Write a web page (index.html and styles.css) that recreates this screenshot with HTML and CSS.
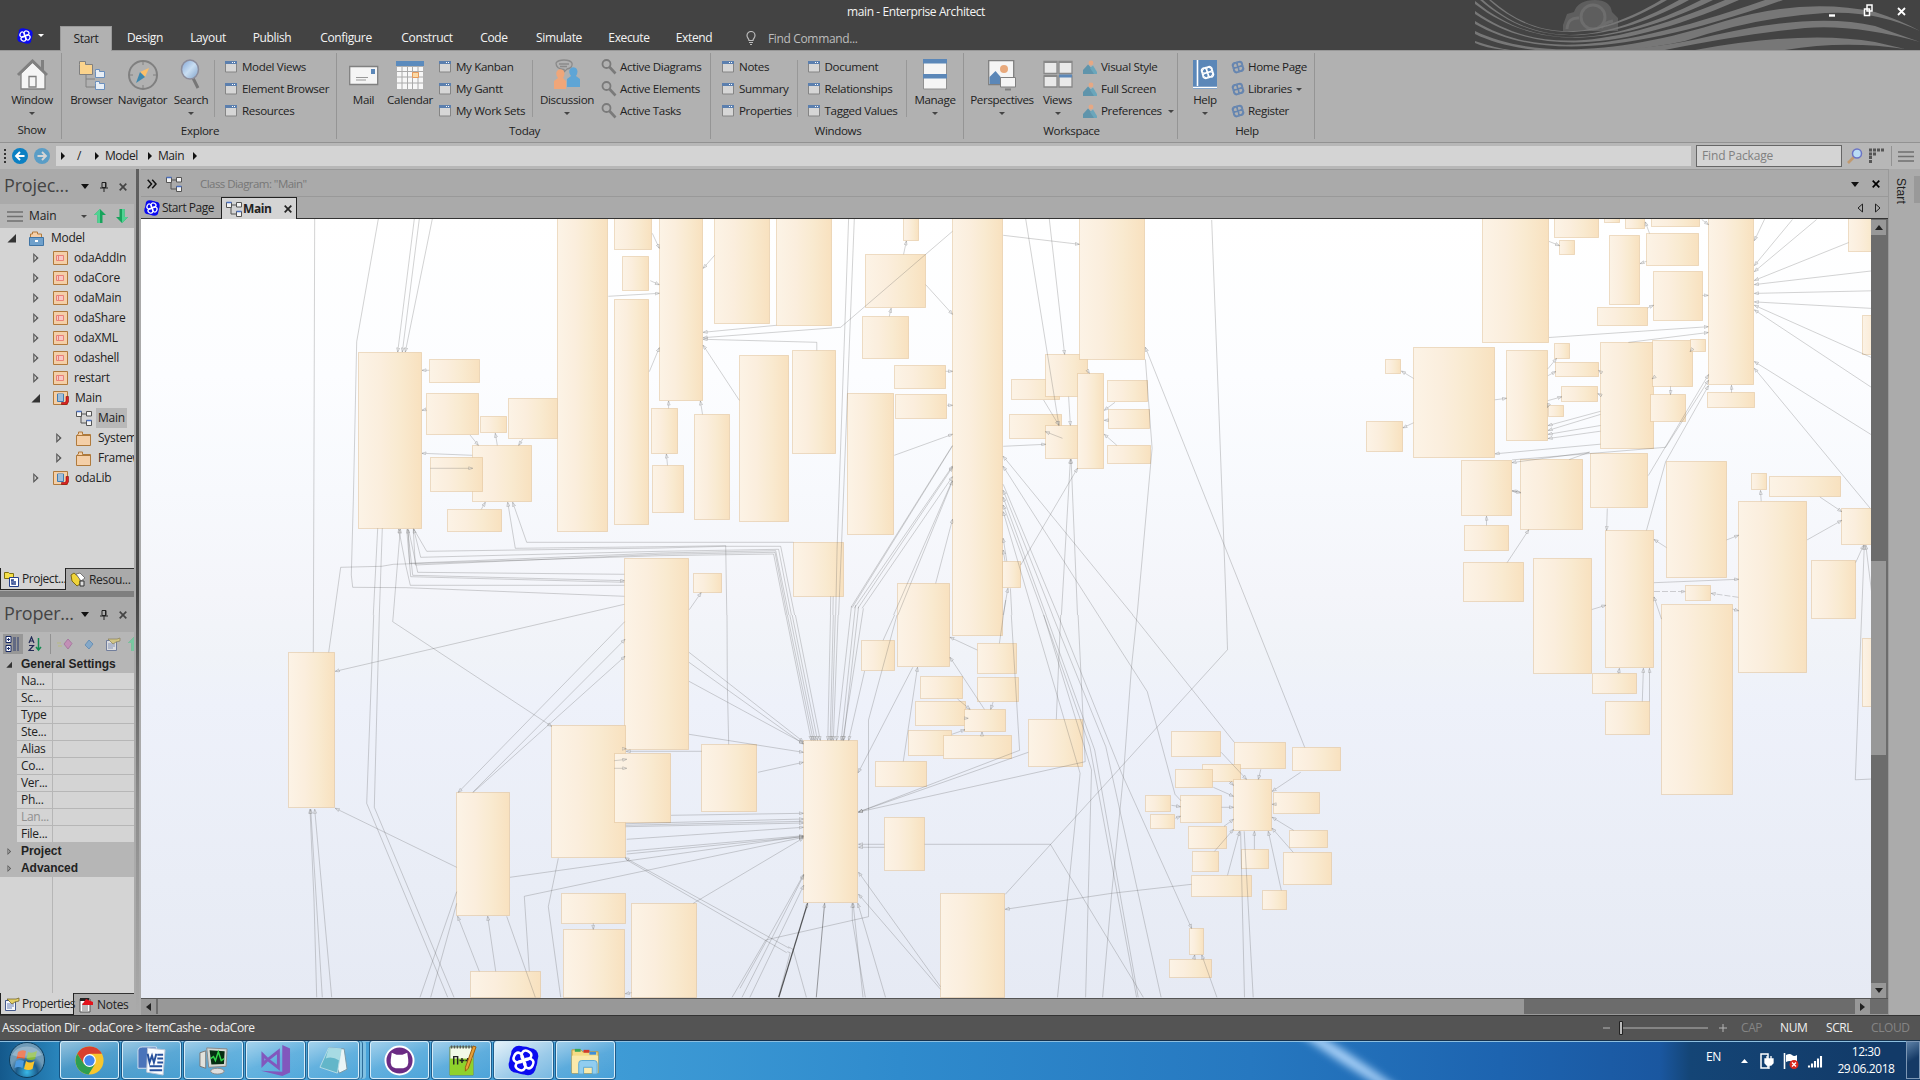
FILE: index.html
```html
<!DOCTYPE html>
<html lang="en">
<head>
<meta charset="utf-8">
<title>main - Enterprise Architect</title>
<link rel="stylesheet" href="styles.css">
</head>
<body>
<svg class="defs" width="0" height="0">
  <defs>
    <linearGradient id="box" x1="0" x2="1" y1="0" y2="0"><stop offset="0" stop-color="#fcf3e6"/><stop offset=".35" stop-color="#fbeedd"/><stop offset=".65" stop-color="#f9ead0"/><stop offset="1" stop-color="#f8e1bf"/></linearGradient>
    <linearGradient id="lens" x1="0" x2="1" y1="0" y2="1"><stop offset="0" stop-color="#7fa3d4"/><stop offset=".5" stop-color="#c9def2"/><stop offset="1" stop-color="#7ea0c8"/></linearGradient>
    <marker id="arrow" viewBox="0 0 6 6" refX="6" refY="3" markerWidth="5" markerHeight="4" markerUnits="userSpaceOnUse" orient="auto"><path d="M0 .7L6 3L0 5.3z" fill="#fff" fill-opacity=".3" stroke="#666" stroke-opacity=".4" stroke-width="1"/></marker>
  </defs>
  <symbol id="i-win" viewBox="0 0 12 12"><path d="M.5 .5h11v10.500h-11z" fill="#d6d6d6" stroke="#858585"/><path d="M0 0h12v3H0z" fill="#5b7fae"/><path d="M7 1h1v1H7zM9 1h1v1H9z" fill="#fff"/></symbol>
  <symbol id="i-mag" viewBox="0 0 16 16"><circle cx="5.500" cy="5" r="4" fill="none" stroke="#7a7a7a" stroke-width="1.800"/><path d="M8.500 8l6 6.500" stroke="#7a7a7a" stroke-width="2.600"/></symbol>
  <symbol id="i-pic" viewBox="0 0 14 14"><circle cx="8" cy="3" r="2.400" fill="#e6a884"/><path d="M0 14V10L5 4.500L14 14z" fill="#5f94ab"/><path d="M7 8l3-2.500L14 12v2h-3z" fill="#6ba6bb"/></symbol>
  <symbol id="i-knot" viewBox="0 0 16 16"><g fill="none" stroke="currentColor" stroke-width="1.400" transform="rotate(28 8 8)"><path d="M8 8C4.500 6.500 4.500 1 8 1s4 5 0 7M8 8c1.500-3.500 7-3.500 7 0s-5 4-7 0M8 8c3.500 1.500 3.500 7 0 7s-4-5 0-7M8 8c-1.500 3.500-7 3.500-7 0s5-4 7 0"/><circle cx="8" cy="8" r="5.800"/></g></symbol>
  <symbol id="i-ea" viewBox="0 0 24 24"><g fill="#0a0af0"><circle cx="12" cy="12" r="10.800"/><circle cx="8.500" cy="6.500" r="6"/><circle cx="17.500" cy="8.500" r="6"/><circle cx="15.500" cy="17.500" r="6"/><circle cx="6.500" cy="15.500" r="6"/></g><g fill="none" stroke="#fff" stroke-width="1.900" transform="rotate(28 12 12)"><path d="M12 12C7 10 7 4 12 4s5 5 0 8"/><path d="M12 12c2-5 8-5 8 0s-5 5-8 0"/><path d="M12 12c5 2 5 8 0 8s-5-5 0-8"/><path d="M12 12c-2 5-8 5-8 0s5-5 8 0"/></g></symbol>
  <symbol id="i-dia" viewBox="0 0 16 16"><path d="M6 4h5M5 6v7h5" fill="none" stroke="#555"/><path d="M.5 1.500h5v5h-5zM10.500 1.500h5v4.500h-5zM10.500 10.500h5v5h-5z" fill="#f4f4f4" stroke="#555"/><path d="M.5 1.500h5M10.500 10.500h5" stroke="#4a6fc0" stroke-width="1.600"/></symbol>
  <symbol id="i-comp" viewBox="0 0 15 14"><path d="M.5 .5h14v13h-14z" fill="#f4cfa8" stroke="#b07a3c"/><path d="M3.500 4.500h7v5h-7zM5.500 4.500v5" fill="#f8c8c4" stroke="#e8817a"/></symbol>
  <symbol id="i-doc" viewBox="0 0 16 14"><path d="M.5 .5h14v13h-14z" fill="#f4cfa8" stroke="#b07a3c"/><path d="M4.500 3h6v7.500h-6z" fill="#fff" stroke="#3e7cb4"/><path d="M5 5h5M5 7h5M5 9h5" stroke="#3e7cb4"/><path d="M15.500 5.500v5.500l-2 2.500H8.500v-2h3l1.500-1V5.500z" fill="#d22" stroke="#700" stroke-width=".5"/></symbol>
  <symbol id="i-fold" viewBox="0 0 16 15"><path d="M.5 14.500v-10L2.500 3V1h4v2.500h8v11z" fill="#f4cfa8" stroke="#b07a3c"/><path d="M.5 4.500h14" stroke="#b07a3c"/></symbol>
  <symbol id="i-pin" viewBox="0 0 8 10"><path d="M2 .5h4v5H2zM0 6h8M4 6v4M5.500 1v5" fill="none" stroke="#222"/></symbol>
  <symbol id="i-x" viewBox="0 0 8 8"><path d="M.7 .7l6.600 6.600M7.300 .7L.7 7.300" stroke="currentColor" stroke-width="1.700"/></symbol>
  <symbol id="i-up" viewBox="0 0 12 14"><path d="M6 0l6 6H8.500v8h-5V6H0z" fill="#18a45c"/><path d="M6 0L0 6h3.500v8H6z" fill="#4fd392"/></symbol>
  <symbol id="i-bars" viewBox="0 0 16 11"><path d="M0 1h16M0 5.500h16M0 10h16" stroke="#707070" stroke-width="1.600"/></symbol>
  <symbol id="i-hand" viewBox="0 0 16 14"><path d="M1.500 3.500h10v10h-10z" fill="#f4f6fb" stroke="#44598c"/><path d="M3 7h7M3 9h7M3 11h5" stroke="#6a82b8"/><path d="M3 2h9l3-1v3l-4 1-3 2-3-3z" fill="#e3cf66" stroke="#6a5a20" stroke-width=".7"/></symbol>
</svg>

<header class="title">
  <svg class="waves" viewBox="0 0 445 50" preserveAspectRatio="none">
    <g fill="#5e5e5e"><path d="M88 31V25L92 14L99 12Q103 0 120 0Q135 0 137 12L143 18V31z"/></g>
    <g fill="none" stroke="#6d6d6d" stroke-width="3"><circle cx="118" cy="17" r="12"/><path d="M92 29Q93 17 104 18M126 28Q130 22 138 21"/></g>
    <g fill="#777">
      <path d="M16 0C60 38 110 45 186 0h6C110 48 56 37 14 0z"/>
      <path d="M8 0C60 46 120 47 204 0h10C120 50 56 44 5 0z"/>
      <path d="M0 1C60 51 130 48 226 0h12C130 52 56 47 0 4z"/>
      <path d="M0 11C60 54 130 50 250 0h14C140 54 60 54 0 14z"/>
      <path d="M0 21C60 58 140 52 290 0h18C150 56 60 58 0 24z"/>
      <path d="M0 31C60 60 150 53 250 21Q330-3 400 12Q425 20 445 31Q400 10 350 13Q280 17 210 41C120 60 40 54 0 34z"/>
      <path d="M20 50C100 56 180 50 240 35Q340 12 400 26L445 42Q380 24 330 28Q270 34 190 50z"/>
      <path d="M220 50Q330 30 400 42L430 49Q370 40 310 50z"/>
      <path d="M0 41Q20 48 36 50H30Q10 48 0 43z"/>
    </g>
  </svg>
  <div class="caption">main - Enterprise Architect</div>
  <div class="winbtns"><svg width="80" height="14" viewBox="0 0 80 14"><path d="M0 11.500h6" stroke="#fff" stroke-width="2.400"/><path d="M38 1h5v6h-5zM35.500 5h5v6.500h-5z" fill="#444" stroke="#fff" stroke-width="1.500"/><path d="M69 4l7 7M76 4l-7 7" stroke="#fff" stroke-width="1.800"/></svg></div>
  <nav class="tabs">
    <span class="app"><svg width="16" height="16"><use href="#i-ea"/></svg><i class="dn w"></i></span>
    <span class="on">Start</span><span>Design</span><span>Layout</span><span>Publish</span><span>Configure</span><span>Construct</span><span>Code</span><span>Simulate</span><span>Execute</span><span>Extend</span>
    <span class="find"><svg width="10" height="14" viewBox="0 0 10 14"><path d="M3 9.500C3 7.500 1 7 1 4.500a4 4 0 0 1 8 0C9 7 7 7.500 7 9.500zM3 11.500h4M4 13.500h2" fill="none" stroke="#bbb" stroke-width="1.200"/></svg>Find Command...</span>
  </nav>
</header>

<section class="ribbon">
  <div class="group g-show"><div class="tools">
    <div class="big"><svg width="32" height="32" viewBox="0 0 32 32"><path d="M5 14v16h24V14L16.500 3z" fill="#f5f5f5" stroke="#808080" stroke-width="1.300"/><path d="M2 16L16.500 2L31 16M26.500 1v10" fill="none" stroke="#808080" stroke-width="3"/><path d="M13 17.500h7v10.500h-7z" fill="none" stroke="#808080" stroke-width="1.300"/></svg><b>Window</b><i class="dn"></i></div>
  </div><div class="gname">Show</div></div>

  <div class="group g-explore"><div class="tools">
    <div class="big"><svg width="30" height="32" viewBox="0 0 30 32"><path d="M9 15v13h9M9 20h9" fill="none" stroke="#808080"/><path d="M2.500 5.500v-3h6v3h7v10h-13z" fill="#fbd38c" stroke="#808080"/><path d="M18.500 12.500v-2h4v2h5v6h-9zM18.500 24.500v-2h4v2h5v6h-9z" fill="#e8eef5" stroke="#6a8fbd"/></svg><b>Browser</b></div>
    <div class="big"><svg width="32" height="32" viewBox="0 0 32 32"><circle cx="16" cy="16" r="14" fill="none" stroke="#808080" stroke-width="2"/><path d="M16 3v3M16 26v3M3 16h3M26 16h3" stroke="#808080"/><path d="M22 9L18 18L13 13z" fill="#fbc06a"/><path d="M9 24l4-11 5 5z" fill="#3f88ae"/></svg><b>Navigator</b></div>
    <div class="big"><svg width="32" height="32" viewBox="0 0 32 32"><path d="M18 19l5 10" stroke="#777" stroke-width="3"/><ellipse cx="15" cy="10.500" rx="8.500" ry="9.500" fill="url(#lens)" stroke="#8c8c9a" stroke-width="1.500"/></svg><b>Search</b><i class="dn"></i></div>
    <hr>
    <ul class="list"><li><svg><use href="#i-win"/></svg>Model Views</li><li><svg><use href="#i-win"/></svg>Element Browser</li><li><svg><use href="#i-win"/></svg>Resources</li></ul>
  </div><div class="gname">Explore</div></div>

  <div class="group g-today"><div class="tools">
    <div class="big"><svg width="30" height="32" viewBox="0 0 30 32"><path d="M.7 7.500h28v18h-28z" fill="#f5f5f5" stroke="#808080" stroke-width="1.300"/><path d="M22 10h4v5h-4z" fill="#5b87b8"/><path d="M7 18.500h12M7 21h10" stroke="#999"/></svg><b>Mail</b></div>
    <div class="big"><svg width="28" height="32" viewBox="0 0 28 32"><path d="M0 2h28v5H0z" fill="#5b8bbd"/><path d="M1 8h26v22H1z" fill="#f7f7f7"/><path d="M6 8v22M11.500 8v22M16.500 8v22M22 8v22M1 12.500h26M1 18h26M1 24h26" stroke="#aaa"/><path d="M16.500 13.500h6v5h-6z" fill="#fbd9a5" stroke="#e79a5c"/></svg><b>Calendar</b></div>
    <ul class="list kan"><li><svg><use href="#i-win"/></svg>My Kanban</li><li><svg><use href="#i-win"/></svg>My Gantt</li><li><svg><use href="#i-win"/></svg>My Work Sets</li></ul>
    <hr>
    <div class="big wide"><svg width="30" height="32" viewBox="0 0 30 32"><path d="M4 4q2-3 8-3t8 3q1 5-5 6l-3 3v-2.500Q4 10 4 4zM7 5h10M8 7.500h7" fill="none" stroke="#8a8a8a" stroke-width="1.300"/><path d="M2 30V22l4-3q-3-4-1-7t6-1q3 3 0 8l3 3v8z" fill="#f0a679"/><path d="M15 28V20l4-3q-3-4-1-7t6-1q3 3 0 8l4 3v8z" fill="#5ea5d6"/></svg><b>Discussion</b><i class="dn"></i></div>
    <ul class="list magl"><li><svg><use href="#i-mag"/></svg>Active Diagrams</li><li><svg><use href="#i-mag"/></svg>Active Elements</li><li><svg><use href="#i-mag"/></svg>Active Tasks</li></ul>
  </div><div class="gname">Today</div></div>

  <div class="group g-windows"><div class="tools">
    <ul class="list notes"><li><svg><use href="#i-win"/></svg>Notes</li><li><svg><use href="#i-win"/></svg>Summary</li><li><svg><use href="#i-win"/></svg>Properties</li></ul>
    <hr>
    <ul class="list docs"><li><svg><use href="#i-win"/></svg>Document</li><li><svg><use href="#i-win"/></svg>Relationships</li><li><svg><use href="#i-win"/></svg>Tagged Values</li></ul>
    <hr>
    <div class="big man"><svg width="24" height="32" viewBox="0 0 24 32"><path d="M.5 .5h23v29.500H.5z" fill="#f5f5f5" stroke="#909090"/><path d="M0 0h24v4.500H0zM0 15h24v4.500H0z" fill="#5b87b8"/></svg><b>Manage</b><i class="dn"></i></div>
  </div><div class="gname">Windows</div></div>

  <div class="group g-work"><div class="tools">
    <div class="big persp"><svg width="30" height="32" viewBox="0 0 30 32"><path d="M1.700 1.700h25v24h-25z" fill="#f5f5f5" stroke="#808080" stroke-width="1.300"/><circle cx="17" cy="10" r="4" fill="#e8a97c"/><path d="M2.500 25V18l6-6 6 7v6z" fill="#5b87b8"/><path d="M13.500 18.500h15v9.500h-15z" fill="#f5f5f5" stroke="#808080"/><path d="M18 30.500h6" stroke="#808080" stroke-width="2"/></svg><b>Perspectives</b><i class="dn"></i></div>
    <div class="big views"><svg width="30" height="32" viewBox="0 0 30 32"><path d="M1 2.500h13v12H1zM16 2.500h13v12H16zM1 17h13v11H1zM16 17h13v11H16z" fill="#e9e9e9" stroke="#888" stroke-width="1.300"/><path d="M1 3h13M16 3h13M1 17h13" stroke="#888" stroke-width="2"/><path d="M16 17h13" stroke="#5b87b8" stroke-width="3"/></svg><b>Views</b><i class="dn"></i></div>
    <ul class="list pics"><li><svg><use href="#i-pic"/></svg>Visual Style</li><li><svg><use href="#i-pic"/></svg>Full Screen</li><li><svg><use href="#i-pic"/></svg>Preferences<i class="dn"></i></li></ul>
  </div><div class="gname">Workspace</div></div>

  <div class="group g-help"><div class="tools">
    <div class="big helpb"><svg width="24" height="32" viewBox="0 0 24 32"><path d="M0 1h24v29H0z" fill="#5b87b8"/><path d="M4.500 1v26M0 28.500h24" stroke="#fff" stroke-width="1.600"/><svg x="7" y="6" width="15" height="15" color="#fff"><use href="#i-knot"/></svg></svg><b>Help</b><i class="dn"></i></div>
    <ul class="list knots"><li><svg><use href="#i-knot"/></svg>Home Page</li><li><svg><use href="#i-knot"/></svg>Libraries<i class="dn"></i></li><li><svg><use href="#i-knot"/></svg>Register</li></ul>
  </div><div class="gname">Help</div></div>
</section>

<div class="address">
  <i class="grip"></i>
  <svg width="16" height="16" viewBox="0 0 16 16"><circle cx="8" cy="8" r="8" fill="#0b80c3"/><path d="M12.500 8H4.500M8 4L4 8l4 4" fill="none" stroke="#fff" stroke-width="1.900"/></svg>
  <svg class="fwd" width="16" height="16" viewBox="0 0 16 16"><circle cx="8" cy="8" r="8" fill="#5a9dc6"/><path d="M3.500 8h8M8 4l4 4-4 4" fill="none" stroke="#d5d5d5" stroke-width="1.900"/></svg>
  <div class="path"><i class="rt"></i><span class="p1">/</span><i class="rt"></i><span class="p2">Model</span><i class="rt"></i><span class="p3">Main</span><i class="rt"></i></div>
  <div class="findpkg">Find Package</div>
  <svg class="fi" width="16" height="16" viewBox="0 0 16 16"><path d="M1 15l6-6" stroke="#c19a70" stroke-width="2.600"/><circle cx="10" cy="5.500" r="4.500" fill="#b9dcf5" stroke="#6b74c4" stroke-width="1.500"/></svg>
  <svg class="fg" width="16" height="16" viewBox="0 0 16 16"><path d="M0 2h16M0 6h8" stroke="#555" stroke-width="3" stroke-dasharray="3 1"/><path d="M1.500 8v8" stroke="#555" stroke-width="3" stroke-dasharray="3 1"/></svg>
  <i class="vsep"></i>
  <svg width="16" height="11"><use href="#i-bars"/></svg>
</div>

<main class="work">
  <aside class="left">
    <div class="phead"><span>Projec...</span><i class="dn k"></i><svg width="8" height="10"><use href="#i-pin"/></svg><svg width="8" height="8"><use href="#i-x"/></svg></div>
    <div class="ptool"><svg width="16" height="11"><use href="#i-bars"/></svg><span>Main</span><i class="dn"></i><svg width="12" height="14"><use href="#i-up"/></svg><svg class="flip" width="12" height="14"><use href="#i-up"/></svg></div>
    <ul class="tree">
      <li class="l0"><i class="open"></i><svg width="16" height="15" viewBox="0 0 16 15"><path d="M1.500 6V3h2V1h5v2h4v3" fill="#f4cfa8" stroke="#b07a3c"/><path d="M.5 6.500h14v8H.5z" fill="#6fa0cb" stroke="#3f74a5"/><path d="M6 9h3v2H6z" fill="#fff"/></svg><span>Model</span></li>
      <li class="l1"><i class="shut"></i><svg width="15" height="14"><use href="#i-comp"/></svg><span>odaAddIn</span></li>
      <li class="l1"><i class="shut"></i><svg width="15" height="14"><use href="#i-comp"/></svg><span>odaCore</span></li>
      <li class="l1"><i class="shut"></i><svg width="15" height="14"><use href="#i-comp"/></svg><span>odaMain</span></li>
      <li class="l1"><i class="shut"></i><svg width="15" height="14"><use href="#i-comp"/></svg><span>odaShare</span></li>
      <li class="l1"><i class="shut"></i><svg width="15" height="14"><use href="#i-comp"/></svg><span>odaXML</span></li>
      <li class="l1"><i class="shut"></i><svg width="15" height="14"><use href="#i-comp"/></svg><span>odashell</span></li>
      <li class="l1"><i class="shut"></i><svg width="15" height="14"><use href="#i-comp"/></svg><span>restart</span></li>
      <li class="l1"><i class="open"></i><svg width="16" height="14"><use href="#i-doc"/></svg><span>Main</span></li>
      <li class="l2"><i></i><svg width="16" height="16"><use href="#i-dia"/></svg><span class="sel">Main</span></li>
      <li class="l2"><i class="shut"></i><svg width="16" height="15"><use href="#i-fold"/></svg><span>System</span></li>
      <li class="l2"><i class="shut"></i><svg width="16" height="15"><use href="#i-fold"/></svg><span>Framew</span></li>
      <li class="l1"><i class="shut"></i><svg width="16" height="14"><use href="#i-doc"/></svg><span>odaLib</span></li>
    </ul>
    <div class="ptabs"><span class="on"><svg width="16" height="16" viewBox="0 0 16 16"><path d="M.5 1.500h4l1 1h4v5h-9z" fill="#f5e04a" stroke="#807010"/><path d="M5.500 6.500h9v9h-9z" fill="#fff" stroke="#25408c"/><path d="M7 9h3M8 9v4h4M9 11h3" stroke="#25408c" stroke-width="1.400" fill="none"/></svg>Project...</span><span><svg width="16" height="16" viewBox="0 0 16 16"><path d="M1 3l3-2 6 5v6l-3 2-5-5z" fill="#f0d43a" stroke="#7d6a12"/><path d="M6 2l4-1 5 5-4 3z" fill="#fff" stroke="#777"/><path d="M10 9h4v5h-4z" fill="#ddd" stroke="#333"/></svg>Resou...</span></div>
    <div class="hsplit"></div>
    <div class="phead"><span>Proper...</span><i class="dn k"></i><svg width="8" height="10"><use href="#i-pin"/></svg><svg width="8" height="8"><use href="#i-x"/></svg></div>
    <div class="ptool props">
      <em><svg width="16" height="16" viewBox="0 0 16 16"><path d="M1 .5h5v6H1zM1 9.500h5v6H1z" fill="#fff" stroke="#182a66"/><path d="M2 3.500h3M3.500 2v3M2 12.500h3M3.500 11v3" stroke="#182a66"/><path d="M8 2h6M8 4h6M8 6h6M8 8h6M8 10h6M8 12h6M8 14h6" stroke="#2c3d70" stroke-dasharray="3 1"/></svg></em>
      <svg width="14" height="16" viewBox="0 0 14 16"><path d="M1 7l2.500-6L6 7M2 5h3M1 9.500h4.500L1 14.500h5" fill="none" stroke="#222a55" stroke-width="1.200"/><path d="M10.500 2v11M8 11l2.500 3 2.500-3" fill="none" stroke="#128a50" stroke-width="1.500"/></svg>
      <i class="vsep"></i>
      <svg width="16" height="14" viewBox="0 0 16 14"><path d="M11 2l4 4.500L11 12 7 7z" fill="#c28fb6" stroke="#a77aa0"/><path d="M0 6h4M1 9h4" stroke="#b9bb80"/></svg>
      <svg class="blue" width="10" height="14" viewBox="0 0 10 14"><path d="M5 3l4 4-4 5-4-4z" fill="#84a8c8" stroke="#6a90b4"/></svg>
      <svg class="dim" width="16" height="14"><use href="#i-hand"/></svg>
      <svg class="dim last" width="12" height="14"><use href="#i-up"/></svg>
    </div>
    <div class="grid">
      <div class="cat"><i class="open s"></i>General Settings</div>
      <div class="row"><span>Na...</span></div><div class="row"><span>Sc...</span></div><div class="row"><span>Type</span></div><div class="row"><span>Ste...</span></div><div class="row"><span>Alias</span></div><div class="row"><span>Co...</span></div><div class="row"><span>Ver...</span></div><div class="row"><span>Ph...</span></div><div class="row off"><span>Lan...</span></div><div class="row"><span>File...</span></div>
      <div class="cat"><i class="shut s"></i>Project</div>
      <div class="cat"><i class="shut s"></i>Advanced</div>
      <div class="rest"></div>
    </div>
    <div class="ptabs second"><span class="on"><svg width="16" height="14"><use href="#i-hand"/></svg>Properties</span><span><svg width="16" height="16" viewBox="0 0 16 16"><path d="M2 2h10v13H2z" fill="#fff" stroke="#555"/><path d="M4 7h6M4 9h6M4 11h6M4 13h6" stroke="#777"/><path d="M2 1h9v3H2z" fill="#222"/><path d="M4 8l4-6 7 3v3z" fill="#e3131b"/></svg>Notes</span></div>
  </aside>
  <div class="vsplit"></div>
  <section class="view">
    <div class="vhead"><svg width="10" height="10" viewBox="0 0 10 10"><path d="M.7 .7L4.500 5 .7 9.300M5.200 .7L9 5 5.200 9.300" fill="none" stroke="#111" stroke-width="1.500"/></svg><svg width="16" height="16"><use href="#i-dia"/></svg><span>Class Diagram: "Main"</span><i class="dn k"></i><svg class="cx" width="8" height="8"><use href="#i-x"/></svg></div>
    <div class="vtabs"><span class="t1"><svg width="16" height="16"><use href="#i-ea"/></svg>Start Page</span><span class="t2"><svg width="16" height="16"><use href="#i-dia"/></svg><b>Main</b><svg width="8" height="8"><use href="#i-x"/></svg></span><svg class="nav" width="24" height="10" viewBox="0 0 24 10"><path d="M5.500 1v8L1 5zM18.500 1v8L23 5z" fill="none" stroke="#222"/></svg></div>
    <div class="body">
      <svg id="canvas" class="canvas" width="1730" height="779" viewBox="141 219 1730 779"></svg>
      <div class="vscroll"><i class="btn"><i class="tri up"></i></i><i class="thumb"></i><i class="btn"><i class="tri dnn"></i></i></div>
      <div class="hscroll"><i class="btn"><i class="tri lf"></i></i><i class="thumb"></i><i class="btn"><i class="tri rg"></i></i></div>
    </div>
  </section>
  <aside class="dock"><span>Start</span><i></i></aside>
</main>

<footer class="status"><span>Association Dir - odaCore &gt; ItemCashe - odaCore</span>
  <svg width="124" height="14" viewBox="0 0 124 14"><path d="M0 7h7M20 7h85M116 7h8M120 3v8" stroke="#b5b5b5"/><path d="M16.500 .5h3v13h-3z" fill="#bbb" stroke="#222"/></svg>
  <span class="s1">CAP</span><span class="s2">NUM</span><span class="s3">SCRL</span><span class="s4">CLOUD</span></footer>

<footer class="taskbar">
  <div class="orb"><svg width="38" height="38" viewBox="0 0 38 38"><defs><radialGradient id="orb" cy=".85"><stop offset="0" stop-color="#39b9e8"/><stop offset=".6" stop-color="#1c5c8c"/><stop offset="1" stop-color="#6f9bb8"/></radialGradient></defs><circle cx="19" cy="19" r="17.500" fill="url(#orb)" stroke="#0d3c5c"/><path d="M10 11q4-3 8-1l-1.500 8q-4-2-8 0z" fill="#e8592b"/><path d="M20 11q4 2 9-1l-2 8q-4 2-8.500 0z" fill="#86b93a"/><path d="M8 20q4-2 8 0l-1.500 7q-4-2-8 0z" fill="#4d9be0"/><path d="M18 20q4 3 8.500 0l-2 8q-4 2-8.500 0z" fill="#fbc52c"/><path d="M4 14a16 13 0 0 1 30 0q-15 6-30 0" fill="#fff" opacity=".25"/></svg></div>
  <div class="tb"><svg viewBox="0 0 32 32"><circle cx="16" cy="16" r="14.500" fill="#f7c62d"/><path d="M3.400 9A14.500 14.500 0 0 1 28.800 9H16L10 19z" fill="#d9402f"/><path d="M3.400 9A14.500 14.500 0 0 0 15 30.500L21.500 20 10 19z" fill="#2e9e4f"/><circle cx="16" cy="16" r="6.600" fill="#fff"/><circle cx="16" cy="16" r="5.300" fill="#4488ee"/></svg></div>
  <div class="tb"><svg viewBox="0 0 32 32"><path d="M2 6q0-4 5-4h14v22H2z" fill="#4a74ba" stroke="#d6e2f2"/><path d="M12 3l18 2-2 26-17-3z" fill="#fafcff" stroke="#b8c4d6"/><path d="M12 9l2 9 2.500-7 2 7 2.500-9M22 10h6M22 14h6M22 18h6M14 22h13M14 26h13" fill="none" stroke="#26509c" stroke-width="2"/></svg></div>
  <div class="tb"><svg viewBox="0 0 32 32"><path d="M2 8l6-2v18l-6-2z" fill="#e2e2dc" stroke="#777"/><path d="M9 3l21 1-1 18-18 1z" fill="#d5d8d4" stroke="#888"/><path d="M12 5.500l15.500 1-.7 13-13 .5z" fill="#052d12"/><path d="M13 14l3-2 2 4 3-9 3 9 3-2" fill="none" stroke="#32d24a" stroke-width="1.500"/><ellipse cx="20" cy="27" rx="7" ry="3" fill="#ddd" stroke="#888"/></svg></div>
  <div class="tb"><svg viewBox="0 0 32 32"><path d="M23 0l8 3.500v25L23 32 1 26.500l22 1z" fill="#8257bd"/><path d="M3 10v10l5-5zM8 15l11-8.500v17z" fill="none" stroke="#8257bd" stroke-width="3"/></svg></div>
  <div class="tb stack"><svg viewBox="0 0 32 32"><path d="M11 3l16 1 3 21-8 4z" fill="#e9f4f6" stroke="#7d99a4"/><path d="M11 3l13 1-4 25L2 23z" fill="#63b6c9" stroke="#b4dbe4"/><path d="M11 3l13 1-2 12q-8-5-14-2z" fill="#a7dbe4"/></svg></div>
  <div class="tb"><svg viewBox="0 0 32 32"><circle cx="16" cy="16" r="14.500" fill="#6b2b84" stroke="#fff" stroke-width="2"/><path d="M8 8l5 2h6l5-2 1 7q1 8-5 9H12Q6 23 7 15z" fill="#fff"/></svg></div>
  <div class="tb"><svg viewBox="0 0 32 32"><path d="M4 2h24v29H4z" fill="#f2fae8" stroke="#6a8a50"/><path d="M4 14h24v17H4z" fill="#8fd12c"/><path d="M5 2h22" stroke="#555" stroke-width="3" stroke-dasharray="1.500 1.500"/><path d="M8 20v-8h4v8M14 16h5M16.500 13.500v5M20 16h5M22.500 13.500v5" fill="none" stroke="#222" stroke-width="1.500"/><path d="M31 2l-8 22-3 3 0-4 8-22z" fill="#e8a13a" stroke="#9b5d10"/></svg></div>
  <div class="tb act"><svg viewBox="0 0 24 24"><use href="#i-ea"/></svg></div>
  <div class="tb"><svg viewBox="0 0 32 32"><path d="M2 5h9l2 2h16v22H2z" fill="#f5dc86" stroke="#c19a3a"/><path d="M5 4h6v3H5z" fill="#3aa655"/><path d="M14 5h6v3h-6z" fill="#d23b2c"/><path d="M20 7h7v3h-7z" fill="#3f8fd9"/><path d="M2 11h27v18H2z" fill="#fae9ab"/><path d="M9 30V19q0-3 3-3h13q3 0 3 3v11h-5v-7h-9v7z" fill="#90cdf0" stroke="#5aa7d3"/></svg></div>
  <i class="beam"></i>
  <div class="tray"><span class="en">EN</span>
    <svg width="90" height="18" viewBox="0 0 90 18"><path d="M0 11l3.500-4 3.500 4z" fill="#fff"/><path d="M20 2h7v14h-7z" fill="none" stroke="#fff" stroke-width="1.500"/><path d="M24 7h8v4l-2 2h-4l-2-2zM26 4v3M30 4v3M28 13v4" fill="#fff" stroke="#fff" stroke-width="1.300"/><path d="M43.500 1v16" stroke="#fff" stroke-width="1.600"/><path d="M45 3q4-2 6 0t5 0v7q-3 2-5 0t-6 0z" fill="#fff"/><circle cx="53" cy="12.500" r="4.500" fill="#d8261c"/><path d="M51 10.500l4 4M55 10.500l-4 4" stroke="#fff" stroke-width="1.300"/><path d="M68 15.500v-2M71 15.500v-4M74 15.500v-6.500M77 15.500v-9M80 15.500V4" stroke="#fff" stroke-width="2.100"/></svg>
    <div class="clock"><span>12:30</span><span>29.06.2018</span></div></div>
  <i class="peek"></i>
</footer>
<script src="diagram.js"></script>
</body>
</html>
```

FILE: styles.css
```css
* { box-sizing: border-box; }
body { margin: 0; width: 1920px; height: 1080px; overflow: hidden; display: flex; flex-direction: column; font: 12px/16px "Open Sans", "Noto Sans", sans-serif; letter-spacing: -.35px; color: #222; background: #aaa; }
ul { list-style: none; margin: 0; padding: 0; }
svg { flex: none; display: block; }
.defs { position: absolute; }
i { flex: none; font-style: normal; }
.dn { width: 0; height: 0; border: 3px solid transparent; border-top: 3px solid #444; border-bottom: 0; }
.dn.w { border-top-color: #fff; }
.dn.k { border-width: 5px 4.500px 0; border-top-color: #111; }

.title { position: relative; height: 51px; flex: none; background: #434343; color: #f4f4f4; display: flex; flex-direction: column; justify-content: space-between; border-bottom: 1px solid #989898; }
.waves { position: absolute; right: 0; top: 0; width: 445px; height: 50px; }
.caption { text-align: center; padding: 4px 88px 0 0; letter-spacing: -.4px; position: relative; }
.winbtns { position: absolute; left: 1829px; top: 4px; }
.tabs { display: grid; grid-template-columns: 60px 52px 66px 60px 68px 80px 82px 52px 78px 62px 68px 160px; height: 24px; line-height: 23px; text-align: center; }
.tabs .on { background: #b1b1b1; color: #222; margin-bottom: -1px; border: 1px solid #999; border-bottom: 0; }
.tabs .app { display: flex; align-items: center; gap: 5px; padding: 0 0 5px 17px; }
.find { display: flex; align-items: center; gap: 12px; padding-left: 18px; color: #bdbdbd; }

.ribbon { height: 92px; flex: none; display: flex; background: #b1b1b1; border-bottom: 1px solid #929292; font-size: 11.600px; letter-spacing: -.35px; }
.group { display: flex; flex-direction: column; border-right: 1px solid #959595; margin: 2px 0 3px; }
.g-show { width: 62px; } .g-explore { width: 275px; } .g-today { width: 374px; } .g-windows { width: 253px; } .g-work { width: 214px; } .g-help { width: 137px; }
.tools { display: flex; height: 69px; }
.gname { text-align: center; line-height: 18px; padding-left: 2px; }
.tools hr { margin: 7px 0 5px; border: 0; width: 1px; background: #989898; flex: none; }
.big { display: flex; flex-direction: column; align-items: center; padding-top: 6px; flex: none; width: 47px; }
.big b { font-weight: 400; line-height: 16px; margin-top: 1px; white-space: nowrap; }
.big .dn { margin-top: 4px; }
.g-show .big { width: 64px; }
.g-explore .tools { padding-left: 4px; } .g-explore .big:nth-child(1), .g-explore .big:nth-child(2) { width: 51px; }
.g-explore .big:nth-child(3) { width: 46px; }
.g-today .tools { padding-left: 3px; } .g-today .big:nth-child(2) { width: 46px; }
.big.wide { width: 68px; } .big.man { width: 56px; } .big.persp { width: 70px; margin-left: 3px; } .big.views { width: 41px; } .big.helpb { width: 50px; margin-left: 2px; }
.list { padding: 3px 0 0 10px; white-space: nowrap; }
.list li { display: flex; align-items: center; height: 22px; gap: 5px; }
.list svg { width: 12px; height: 12px; }
.list .dn { margin-left: 2px; }
.kan { padding-left: 6px; width: 99px; }
.magl { padding-left: 0; } .magl svg, .knots svg { width: 16px; height: 16px; } .magl li { gap: 3px; }
.notes { padding-left: 11px; width: 86px; } .docs { width: 109px; }
.pics { padding-left: 5px; } .pics svg { width: 14px; height: 14px; } .pics li { gap: 4px; }
.knots { padding-left: 0; color: #222; } .knots li { gap: 2px; } .knots svg { color: #6585b0; padding: 1px; }

.address { height: 26px; flex: none; display: flex; align-items: center; background: #b7b7b7; padding: 0 6px 0 4px; }
.grip { width: 2px; height: 15px; background: repeating-linear-gradient(#333 0 2px, transparent 2px 4px); margin-right: 6px; }
.fwd { margin: 0 6px; }
.path { width: 1636px; height: 20px; background: #d4d4d4; display: flex; align-items: center; padding-left: 5px; letter-spacing: -.45px; }
.rt { width: 4px; height: 0; border: 4px solid transparent; border-left-color: #111; border-right: 0; }
.p1 { padding: 0 12px; width: 30px; } .p2 { width: 48px; padding-left: 6px; margin-right: 1px; } .p3 { width: 41px; padding-left: 6px; }
.findpkg { width: 146px; height: 22px; margin-left: 5px; border: 1px solid #666; background: #d4d4d4; color: #808080; line-height: 20px; padding-left: 5px; letter-spacing: -.15px; }
.fi { margin-left: 5px; } .fg { margin-left: 6px; }
.vsep { width: 1px; height: 20px; background: #929292; margin: 0 6px; }

.work { flex: none; height: 846px; display: flex; background: #aaa; }
.left { width: 134px; flex: none; display: flex; flex-direction: column; overflow: hidden; }
.phead { height: 35px; flex: none; display: flex; align-items: center; padding-left: 4px; color: #444; }
.phead span { width: 77px; font-size: 18px; line-height: 30px; white-space: nowrap; letter-spacing: -.2px; padding-bottom: 3px; }
.phead svg:nth-of-type(1) { margin: 0 11px 0 11px; }
.ptool { height: 24px; flex: none; background: #b6b6b6; display: flex; align-items: center; padding-left: 7px; }
.ptool span { padding-left: 6px; width: 58px; letter-spacing: -.1px; }
.ptool svg + svg { margin-left: 10px; } .ptool .dn + svg { margin-left: 7px; }
.flip { transform: rotate(180deg); }
.tree { flex: none; height: 340px; background: #d4d4d4; }
.tree li { display: flex; align-items: center; height: 20px; white-space: nowrap; letter-spacing: -.25px; }
.tree i { width: 9px; height: 10px; }
.tree svg { margin: 0 4px 0 13px; }
.tree span { padding: 0 2px; line-height: 20px; }
.l0 { padding-left: 7px; } .l1 { padding-left: 31px; } .l2 { padding-left: 54px; }
.sel { background: #b8b8b8; }
.open { background: #333; clip-path: polygon(100% 10%, 100% 95%, 5% 95%); width: 9px; height: 10px; }
.shut { position: relative; background: #555; clip-path: polygon(25% 0, 85% 50%, 25% 100%, 25% 75%, 38% 75%, 62% 50%, 38% 22%, 38% 75%, 25% 75%); }
.ptabs { height: 22px; flex: none; display: flex; letter-spacing: -.3px; background: #aaa; }
.ptabs span { display: flex; align-items: center; gap: 3px; height: 22px; padding-left: 4px; white-space: nowrap; flex: 1; border-top: 1px solid #333; }
.ptabs .on { flex: none; width: 66px; background: #d4d4d4; border: 1px solid #222; border-width: 0 1px 1px; padding-left: 3px; gap: 2px; letter-spacing: -.45px; }
.ptabs.second .on { width: 74px; letter-spacing: -.5px; }
.hsplit { height: 6px; flex: none; background: #7f7f7f; margin-top: 1px; }
.props { padding-left: 3px; }
.props em { background: #979797; width: 20px; height: 20px; padding: 2px; margin-right: 5px; }
.ptool.props svg + svg { margin-left: 11px; } .dim { opacity: .6; }
.ptool.props .vsep { margin: 0 6px 0 8px; }
.ptool.props .vsep + svg { margin: 0; } .ptool.props .blue { margin-left: 11px; } 
.ptool.props .last { margin-left: 7px; }
.grid { flex: 1; display: flex; flex-direction: column; background: #d4d4d4; letter-spacing: -.3px; }
.cat { height: 17px; flex: none; background: #b6b6b6; font: bold 12px/17px "Liberation Sans", sans-serif; display: flex; align-items: center; padding-left: 6px; gap: 9px; white-space: nowrap; letter-spacing: -.05px; }
.s { width: 6px; height: 7px; }
.row { height: 17px; flex: none; border-left: 17px solid #b6b6b6; border-bottom: 1px solid #b6b6b6; display: flex; line-height: 16px; }
.row span { width: 36px; padding-left: 4px; border-right: 1px solid #b6b6b6; }
.off { color: #909090; }
.rest { width: 53px; flex: 1; border-right: 1px solid #b6b6b6; }
.vsplit { width: 5px; margin: 0 2px 0 0; border-left: 2px solid #aaa; background: linear-gradient(#606060, #444 50%, #8c8c8c 75%, #aaa); flex: none; }
.view { width: 1747px; flex: none; display: flex; flex-direction: column; }
.vhead { height: 28px; flex: none; display: flex; align-items: center; padding: 2px 0 0 6px; color: #777; border: 1px solid #999; border-width: 1px 0; }
.vhead svg + svg { margin: 0 18px 0 9px; }
.vhead span { flex: none; width: 1650px; font-size: 11.500px; letter-spacing: -.55px; }
.vhead .dn { margin-left: 1px; }
.vhead .cx { margin-left: 13px; color: #000; }
.vtabs { height: 22px; flex: none; display: flex; border-bottom: 1px solid #333; letter-spacing: 0; }
.t1 { display: flex; width: 80px; align-items: center; gap: 2px; padding: 1px 0 0 3px; white-space: nowrap; letter-spacing: -.5px; }
.t2 { display: flex; width: 76px; height: 22px; background: #d4d4d4; border: 1px solid #222; border-bottom: 0; align-items: center; padding-left: 4px; gap: 1px; letter-spacing: -.4px; }
.t2 svg + b + svg { margin-left: 11px; }
.nav { margin: 6px 7px 0 auto; }
.body { display: grid; grid-template: 779px 17px / 1730px 17px; }
.canvas { background: linear-gradient(#fff, #fcfdff 20%, #f7f9fd 35%, #f4f5fa 48%, #f0f3f8 56%, #eef1fa 62%, #e9edf6 85%, #e6eaf4); }
.vscroll { background: #6c6c6c; display: flex; flex-direction: column; padding: 1px 2px 0 0; }
.vscroll .btn { width: 15px; height: 15px; } .vscroll .thumb { height: 194px; margin: 326px 0 228px; }
.btn, .thumb { background: #989898; display: flex; align-items: center; justify-content: center; }
.hscroll { grid-column: 1 / 3; background: #6c6c6c; border-top: 1px solid #555; border-bottom: 1px solid #999; display: flex; padding-right: 17px; }
.hscroll .btn { width: 15px; } .hscroll .thumb { width: 1366px; margin: 0 331px 0 2px; }
.tri { border: 4px solid transparent; }
.up { border-bottom: 5px solid #222; border-top: 0; } .dnn { border-top: 5px solid #222; border-bottom: 0; }
.lf { border-right: 5px solid #222; border-left: 0; } .rg { border-left: 5px solid #222; border-right: 0; }
.dock { flex: 1; display: flex; justify-content: space-between; background: #ababab; border-left: 1px solid #999; padding: 7px 0 0 5px; }
.dock span { writing-mode: vertical-rl; font: 12px/14px "Liberation Sans", sans-serif; letter-spacing: .1px; height: 40px; padding-top: 2px; }
.dock i { width: 6px; height: 27px; background: #999; }

.status { height: 25px; flex: none; display: flex; align-items: center; background: #545454; border-top: 1px solid #333; color: #f0f0f0; padding-left: 2px; letter-spacing: 0; }
.status span:first-child { width: 1601px; letter-spacing: -.4px; }
.status .s1 { width: 39px; margin-left: 14px; color: #858585; } .s2 { width: 46px; } .s3 { width: 45px; } .s4 { color: #858585; }
.status .s1, .s2, .s3, .s4 { letter-spacing: -.4px; }

.taskbar { position: relative; height: 40px; flex: none; display: flex; gap: 4px; border-top: 1px solid #16324e; box-shadow: inset 0 1px #8dbfe0; overflow: hidden; background: linear-gradient(90deg, #14598c, #2a86bd 60px, #4ba6da 250px, #3f9cd6 600px, #2f8bcd 900px, #2678c0 1250px, #1d64b0 1500px, #1a57a0 1660px, #144576 1690px, #123a68 1880px); }
.orb { width: 56px; padding-left: 8px; }
.tb { width: 59px; margin-right: -1px; height: 38px; border: 1px solid #d6ecf8; border-radius: 3px; background: linear-gradient(160deg, rgba(255,255,255,.5), rgba(255,255,255,.15) 50%, rgba(255,255,255,.05)); box-shadow: 0 0 0 1px rgba(10,50,90,.6); display: flex; align-items: center; justify-content: center; flex: none; }
.tb svg { width: 31px; height: 31px; }
.act { background: linear-gradient(150deg, #e4f1fa, #9ccbe9 60%, #79b9e2); }
.stack { width: 51px; margin-right: 7px; box-shadow: 0 0 0 1px #2d6c99, 3px 0 0 #7fc0e2, 4px 0 0 #2d6c99, 7px 0 0 #7fc0e2; }
.beam { position: absolute; left: 1262px; top: 10px; width: 160px; height: 10px; background: #b8dcff; filter: blur(4px); transform: rotate(33deg); border-radius: 50%; }
.tray { position: absolute; left: 1706px; top: 0; display: flex; color: #fff; letter-spacing: -.4px; }
.en { width: 35px; padding-top: 8px; }
.tray svg { margin-top: 11px; }
.clock { width: 70px; display: flex; flex-direction: column; align-items: center; line-height: 17px; padding-top: 2px; }
.peek { position: absolute; right: 0; top: 0; width: 14px; height: 38px; border: 1px solid #7d97b5; background: linear-gradient(150deg, #5d80a6, #153a66 50%); }
```

FILE: diagram.js
```js
// The diagram is stored as sheets. Each sheet has its own origin and unit
// scale; shapes inside a sheet use sheet units.
// boxes: x1,y1,x2,y2   arrows/lines: polylines, arrows end in a small head
const sheets = [
  { ox: 140, oy: 215, sx: 3, sy: 3,
    boxes: `655,412,845,940 868,433,1019,503 859,535,1016,659 1021,604,1100,653 1105,550,1253,671 997,691,1175,860 871,727,1028,829 922,883,1085,949 1252,0,1403,949 1423,0,1535,103 1447,124,1526,227 1423,253,1526,929`,
    arrows: `823,12 773,411|838,12 787,411|877,12 796,411|868,466 846,466|859,583 846,586|997,721 846,715|871,760 998,760|990,660 1015,691|1072,691 1066,655|1148,672 1136,691|1024,883 1036,862|1126,1000 1103,862|1160,982 1118,862|1405,244 1558,235|1531,197 1558,209|1537,55 1558,100|1528,470 1558,398|811,1111 797,1050 776,942|818,1081 803,942|842,1027 821,942|818,1081 1100,1088 1453,1097|760,1200 781,942`,
    lines: `524,0 522,700 520,1312|715,12 650,380 640,860 634,1080 638,1117 800,1118 1453,1144|713,940 700,1200|727,940 718,1200|1126,1000 1560,995|1160,982 1560,982|820,940 860,1009 1560,999|842,1027 1560,1009|804,943 809,1045 1560,1014|820,943 826,1050 1560,1018|602,1057 725,1054 760,1048 1560,1022|602,1057 582,1200|811,1111 1453,1111|800,943 812,1085 1453,1102|806,945 833,1072 1453,1078` },
  { ox: 640, oy: 215, sx: 2.8, sy: 3,
    boxes: `54,0,175,556 208,0,363,325 382,0,537,331 737,0,780,77 631,118,800,278 623,304,752,431 712,451,856,520 715,538,859,610 581,535,710,959 427,406,548,715 278,421,416,919 152,598,251,913 32,580,105,715 35,751,122,892 430,982,570,1144 149,1075,229,1133 1040,493,1175,553 1034,598,1181,671 1135,418,1253,544 1230,0,1413,433 1135,631,1230,730 1225,475,1299,760 1308,496,1421,559 1311,583,1427,640 1308,691,1430,745 1016,1039,1066,1118 875,0,1015,1261 721,1105,867,1355`,
    arrows: `209,121 177,160|382,331 177,352|875,49 562,337 177,368|495,406 495,382 177,373|278,556 177,391|80,580 80,558|175,598 169,558|77,751 74,717|738,118 746,78|800,209 875,298|698,304 703,280|856,469 875,469|860,571 875,571|712,721 875,658|1017,61 1230,88|1080,12 1173,631|1146,12 1189,418|1130,555 1173,631|1200,545 1205,631|1183,670 1135,650|1017,694 1136,688|1254,468 1258,475|1330,562 1300,586|1311,616 1300,616|1335,691 1300,658|828,1105 875,913|1066,1050 1225,760|1180,1200 1205,733|1225,1200 1207,733|1027,1039 1017,970|1022,1039 1017,1005|1017,1200 1030,1120|138,1184 171,1133|600,1180 875,753|610,1180 875,757|622,1180 875,785|722,1200 875,798|1380,1200 1017,724|1283,1200 1017,754|1155,1200 1017,826|1137,1200 1017,847|1130,1200 1017,870|1102,1200 1017,890|1697,1155 1415,397`,
    lines: `584,12 552,1000 548,1200|600,12 564,1000 556,1200|534,1144 533,1200|541,1144 540,1200|1415,433 1434,700 1392,1200|875,691 592,1175|875,693 594,1178|875,795 710,1200|1170,1200 1017,808|1037,1120 1041,1200|56,982 430,982|56,995 240,992 243,1200|56,999 240,994 394,994 433,1200|56,1009 388,1003 424,1200|56,1014 380,1007 417,1200|56,1018 378,1012 412,1200|56,1022 374,1017 408,1200` },
  { ox: 260, oy: 600, sx: 3, sy: 3,
    boxes: `85,157,224,623 590,577,749,946 1094,-125,1286,448 874,376,1097,772 1063,460,1232,667 1324,433,1490,634 904,880,1097,970 911,988,1094,1192 1115,910,1310,1192 631,1114,842,1192`,
    arrows: `400,45 398,65 875,379|1093,13 226,214|1094,65 595,577|638,577 1095,118|640,577 1095,169|590,802 226,625|170,1192 162,900 150,628|187,1192 152,628|215,1192 164,628|658,1114 593,949|707,1114 683,949|1000,970 1000,988|1115,1178 1096,1181|1325,454 1099,454|1063,482 1100,478|1063,505 1100,505|1090,446 1099,446|1287,157 1630,425|1287,187 1630,432|1287,244 1630,430|1287,403 1630,457|1494,517 1630,487|1233,646 1630,640|1097,671 1630,657|1097,680 1630,669|1100,718 1630,682|1100,754 1630,707|1100,762 1630,710|750,832 1630,709|808,1114 793,889 1630,712|1300,910 1630,714|1588,1045 1095,773`,
    lines: `222,45 206,157|341,45 320,610 563,1192|358,45 343,622 582,1192|590,875 480,1192|590,910 512,1192|740,949 826,1192|895,775 865,920 902,1192|1097,676 1630,664|1401,45 1402,250 1406,433|1097,778 1580,1058` },
  { ox: 740, oy: 600, sx: 2.529, sy: 3,
    boxes: `307,121,391,211 600,130,700,220 600,232,705,304 457,229,563,295 444,304,571,376 569,328,672,394 426,391,535,466 515,406,687,475 343,484,472,559 161,421,297,907 365,652,467,811 729,358,865,499 507,880,669,1192 1091,394,1215,469 1251,427,1380,505 1397,442,1519,511 1169,493,1266,544 1101,508,1195,562 1248,538,1345,691 1349,577,1466,640 1025,586,1089,634 1038,643,1099,685 1114,586,1218,667 1134,679,1231,745 1389,691,1486,742 1144,754,1210,814 1269,748,1337,805 1374,757,1496,853 1142,826,1294,889 1321,871,1382,928 1137,985,1172,1063 1086,1078,1193,1132`,
    arrows: `116,45 180,421|120,45 185,421|126,45 190,421|132,45 196,421|140,45 203,421|229,45 222,421|236,45 228,421|241,45 232,421|248,45 236,421|282,18 244,421|292,15 256,421|300,20 262,421|312,25 260,421|315,213 275,421|437,202 299,518|413,484 449,202|600,150 531,112|618,328 531,172|550,297 582,328|640,306 634,328|536,403 569,389|612,406 612,396|567,355 577,355|686,45 707,451 300,636|729,457 300,636|855,45 873,485 300,636|365,733 300,733|365,742 300,742|804,45 965,520 1142,985|1142,853 940,880 671,928|507,1160 300,817|507,1168 300,883|0,1165 161,823|5,1192 161,826|25,1192 161,856|311,1192 286,910|317,1192 284,960 284,910|368,1192 298,910|1217,457 1281,538|1317,508 1311,538|1418,517 1346,574|1238,545 1248,556|1197,562 1248,589|1218,622 1248,622|1091,616 1114,620|1101,655 1114,649|1224,679 1248,658|1200,754 1248,688|1233,826 1263,694|1301,748 1301,694|1369,871 1336,694|1400,691 1346,652|1399,757 1346,685|1356,613 1346,613|1148,1078 1150,1065|1206,1192 1168,1065`,
    lines: `391,45 362,121|397,45 325,360 325,950 65,1020 -20,1192|672,0 656,130|811,45 800,358|742,45 860,520 803,1192|768,45 889,510 874,1192|768,45 885,440 1003,1192|774,45 897,450 1007,1192|790,45 925,440 1065,1192|1193,-1140 1229,0 1233,149 671,883|1004,45 990,200 970,520 940,880 917,1192|906,45 1030,275 1100,583 1115,602|993,45 1250,427|1280,0 1428,442|467,733 785,733 1020,1192|1266,694 1276,1192|1275,694 1298,1192|122,1040 134,1048 168,1192|120,1055 127,1058 97,1192`,
    dark: `98,1192 171,910`, mid: `193,1192 214,910` },
  { ox: 1330, oy: 215, sx: 2.6576, sy: 2.6133,
    boxes: `405,0,581,334 596,0,714,59 610,66,650,104 729,0,770,20 785,0,836,36 854,0,982,30 742,53,823,235 841,48,980,132 859,147,990,276 711,241,844,289 1006,0,1126,443 1378,0,1460,96 1415,262,1460,365 222,346,438,634 147,377,188,415 97,539,193,618 469,353,578,590 596,336,637,374 599,385,714,422 615,448,711,488 580,498,621,527 719,333,860,611 857,328,964,448 958,325,998,357 852,469,945,540 1003,464,1128,503 349,641,483,786 506,639,671,822 692,623,844,765 357,811,475,877 354,908,515,1010 540,897,695,1199 732,824,860,1183 697,1198,815,1251 732,1271,849,1358 894,644,1054,948 944,968,1012,1008 881,1018,1070,1515 1085,748,1267,1196 1120,675,1160,718 1168,683,1357,736 1359,767,1460,861 1279,903,1397,1055 1415,1108,1460,1285`,
    arrows: `582,69 610,80|849,48 838,18|841,121 824,127|988,12 1006,25|990,210 1005,210|844,243 860,236|582,320 1005,292|793,333 1005,307|1155,11 1128,67|1229,12 1128,132|1293,12 1128,148|1378,72 1128,171|1440,146 1128,182|1440,198 1128,205|1440,244 1128,227|1440,373 1128,236|1440,451 1128,248|1440,575 1128,383|1435,766 1128,401|1067,464 1067,445|846,681 1006,417|484,640 892,607 1006,432|841,824 892,645 1006,446|222,427 190,408|222,543 194,556|438,483 469,479|579,402 602,375|579,420 600,409|579,485 616,475|582,493 578,503|722,412 714,406|722,472 712,467|719,513 580,550|719,521 580,563|719,550 580,573|719,565 580,584|719,599 439,624|965,348 957,357|864,422 856,428|905,448 905,469|636,639 690,620 484,647|506,724 484,721|484,721 507,726|416,811 416,787|471,908 528,823|737,767 735,824|894,869 861,848|1054,849 1086,837|861,961 1086,952|881,1056 861,998|1070,1030 1086,1034|696,1031 733,1020|1146,748 1144,720|1302,737 1360,775|1268,849 1360,798|1397,908 1418,863|1440,990 1424,863|767,1198 769,1185|830,1271 833,1185|849,1271 849,1185|1440,1474 1396,1476 1420,863`,
    dashed: `861,984 944,984|1085,999 1013,989` }
];

const NS = 'http://www.w3.org/2000/svg';
const canvas = document.getElementById('canvas');

function add(name, attrs) {
  const el = document.createElementNS(NS, name);
  for (const key in attrs) el.setAttribute(key, attrs[key]);
  canvas.appendChild(el);
}

function connectors(sheet, text, className, head) {
  if (!text) return;
  for (const line of text.split('|')) {
    const points = line.split(' ').map(p => {
      const [x, y] = p.split(',').map(Number);
      return (sheet.ox + x / sheet.sx).toFixed(1) + ',' + (sheet.oy + y / sheet.sy).toFixed(1);
    }).join(' ');
    const attrs = { points, class: className };
    if (head) attrs['marker-end'] = 'url(#arrow)';
    add('polyline', attrs);
  }
}

const css = document.createElementNS(NS, 'style');
css.textContent = `
  .node { fill: url(#box); stroke: #dcb98a; stroke-opacity: .45; }
  .link, .dash { fill: none; stroke: #555; stroke-opacity: .26; stroke-width: 1; }
  .dash { stroke-dasharray: 6 2; }
  .link-mid { fill: none; stroke: #444; stroke-opacity: .5; }
  .link-dark { fill: none; stroke: #222; stroke-opacity: .75; stroke-width: 1.2; }`;
canvas.appendChild(css);

for (const sheet of sheets) {
  for (const box of sheet.boxes.split(' ')) {
    const [x1, y1, x2, y2] = box.split(',').map(Number);
    const x = Math.floor(sheet.ox + x1 / sheet.sx), y = Math.floor(sheet.oy + y1 / sheet.sy);
    add('rect', { class: 'node', x: x + .5, y: y + .5,
      width: Math.ceil(sheet.ox + x2 / sheet.sx) - x - 1,
      height: Math.ceil(sheet.oy + y2 / sheet.sy) - y - 1 });
  }
}
for (const sheet of sheets) {
  connectors(sheet, sheet.arrows, 'link', true);
  connectors(sheet, sheet.lines, 'link', false);
  connectors(sheet, sheet.dashed, 'dash', true);
  connectors(sheet, sheet.mid, 'link-mid', true);
  connectors(sheet, sheet.dark, 'link-dark', true);
}
```
